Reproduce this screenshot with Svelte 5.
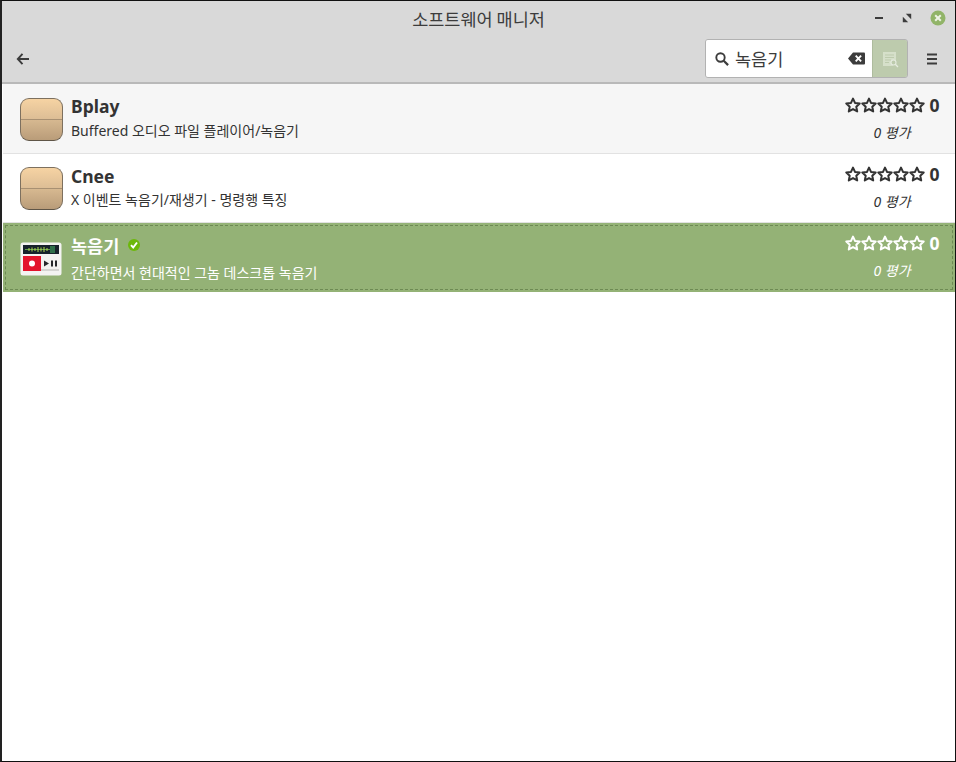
<script>
  const rows = [
    { name: 'Bplay', desc: 'Buffered 오디오 파일 플레이어/녹음기', icon: 'box', cls: 'first' },
    { name: 'Cnee', desc: 'X 이벤트 녹음기/재생기 - 명령행 특징', icon: 'box', cls: 'plain' },
    { name: '녹음기', desc: '간단하면서 현대적인 그놈 데스크톱 녹음기', icon: 'rec', cls: 'selected', installed: true }
  ];
  const stars = [0, 1, 2, 3, 4];
  const starPath = 'M8 1.6l2 4.3 4.7.6-3.4 3.2.9 4.7L8 12.1l-4.2 2.3.9-4.7L1.3 6.5 6 5.9z';
</script>

<div class="window">
  <header class="header">
    <div class="titlebar">
      <span class="title">소프트웨어 매니저</span>
      <div class="controls">
        <svg width="10" height="10" viewBox="0 0 10 10"><rect x="1" y="4" width="8" height="2" fill="#3c3c3c" /></svg>
        <svg class="restore" width="10" height="10" viewBox="0 0 10 10"><path d="M3.800.8H9.200v5.400zM.8 3.800L6.200 9.200H.8z" fill="#3c3c3c" /></svg>
        <svg width="16" height="16" viewBox="0 0 16 16"><circle cx="8" cy="8" r="7.500" fill="#91b468" /><path d="M5.200 5.200l5.600 5.600M10.800 5.200l-5.600 5.600" stroke="#eef3e6" stroke-width="2" /></svg>
      </div>
    </div>
    <div class="toolbar">
      <svg class="back" width="14" height="14" viewBox="0 0 14 14"><path d="M6.500 1.800L1.800 7l4.700 5.200M2 7h11" fill="none" stroke="#3c3c3c" stroke-width="1.900" /></svg>
      <div class="search">
        <div class="entry">
          <svg width="16" height="16" viewBox="0 0 16 16"><circle cx="6.500" cy="6.500" r="4.200" fill="none" stroke="#3c3c3c" stroke-width="1.900" /><path d="M9.700 9.700l4.400 4.400" stroke="#3c3c3c" stroke-width="2.200" /></svg>
          <span class="query">녹음기</span>
          <svg class="clear" width="17" height="13" viewBox="0 0 17 13"><path d="M5 .5H16a1 1 0 0 1 1 1v10a1 1 0 0 1-1 1H5L0 6.500z" fill="#3c3c3c" /><path d="M7.700 3.700l5.400 5.600M13.100 3.700L7.700 9.300" stroke="#fff" stroke-width="1.900" /></svg>
        </div>
        <div class="toggle">
          <svg width="18" height="18" viewBox="0 0 18 18"><path d="M2 2h13v9.500l-3.500 4.500H2z" fill="#d6e0ca" /><path d="M4 5h9M4 7.500h9M4 10h6M4 12.500h4" stroke="#bdcbad" stroke-width="1" /><circle cx="12.500" cy="12.500" r="2.500" fill="#bdcbad" stroke="#e6ece0" stroke-width="1.100" /><path d="M14.300 14.300l2.700 2.700" stroke="#e6ece0" stroke-width="1.300" /></svg>
        </div>
      </div>
      <svg class="menu" width="12" height="12" viewBox="0 0 12 12"><path d="M1 1.500h10M1 6h10M1 10.500h10" stroke="#3c3c3c" stroke-width="2" /></svg>
    </div>
  </header>

  <main class="list">
    {#each rows as row}
      <div class="row {row.cls}">
        <div class="app-icon">
          {#if row.icon === 'box'}
            <div class="box"></div>
          {:else}
            <svg width="42" height="34" viewBox="0 0 42 34">
              <rect x=".5" y=".5" width="41" height="33" rx="2.500" fill="#f3f3f1" />
              <rect x="3" y="3" width="36" height="9" fill="#17222b" />
              <path d="M5 7.500h26" stroke="#5f9e4a" stroke-width="1" />
              <path d="M9 6v3M12 5.500v4M15 6v3M18 5v5M21 5.500v4M24 5v5M27 6v3" stroke="#b6dc55" stroke-width="1" />
              <rect x="30" y="4" width="5" height="7" fill="#2f6f4a" />
              <rect x="3" y="14" width="18" height="15" fill="#e3142c" />
              <circle cx="12" cy="21.500" r="3" fill="#fff" />
              <path d="M24 18.500l5 3-5 3z" fill="#26282b" />
              <path d="M31 18.500h2v6h-2zM35 18.500h2v6h-2z" fill="#26282b" />
              <rect x="21" y="27" width="18" height="2" fill="#d5d5d2" />
            </svg>
          {/if}
        </div>
        <div class="info">
          <div class="name">
            {row.name}
            {#if row.installed}
              <svg class="check" width="12" height="12" viewBox="0 0 12 12"><circle cx="6" cy="6" r="6" fill="#6cb80a" /><path d="M3 6.200l2.200 2.300L9 3.500" fill="none" stroke="#fff" stroke-width="1.900" /></svg>
            {/if}
          </div>
          <div class="desc">{row.desc}</div>
        </div>
        <div class="rating">
          <div class="score">
            <span class="stars">
              {#each stars as s (s)}
                <svg width="16" height="16" viewBox="0 0 16 16"><path d={starPath} fill="none" stroke="currentColor" stroke-width="2" stroke-linejoin="round" /></svg>
              {/each}
            </span>
            <span class="num">0</span>
          </div>
          <div class="count">0 평가</div>
        </div>
      </div>
    {/each}
  </main>
</div>

<style>
  :global(body) {
    margin: 0;
    background: #fff;
  }
  .window {
    box-sizing: border-box;
    width: 956px;
    height: 762px;
    display: flex;
    flex-direction: column;
    border-top: 1px solid #111;
    border-right: 1px solid #111;
    border-bottom: 1px solid #111;
    border-left: 2px solid #222;
    font-family: "Noto Sans", "Noto Sans CJK KR", sans-serif;
    color: #333;
    overflow: hidden;
  }
  .header {
    height: 81px;
    background: #d9d9d9;
    border-bottom: 2px solid #b9b9b9;
    flex: none;
    display: flex;
    flex-direction: column;
  }
  .titlebar {
    height: 37px;
    position: relative;
    display: flex;
    justify-content: center;
    align-items: center;
  }
  .title {
    font-size: 17.500px;
    font-family: "Noto Sans CJK KR", sans-serif;
    font-weight: 400;
    color: #3c3c3c;
    margin-top: -2px;
  }
  .controls {
    position: absolute;
    right: 9px;
    top: 9px;
    display: flex;
    align-items: center;
    gap: 18px;
  }
  .toolbar {
    flex: 1;
    display: flex;
    align-items: center;
    padding: 0 17px 4px 14px;
    margin-top: 1px;
  }
  .back {
    margin-right: auto;
  }
  .search {
    display: flex;
    height: 39px;
    box-sizing: border-box;
    width: 203px;
    margin-right: 18px;
    border: 1px solid #b2b2b2;
    border-radius: 3px;
    overflow: hidden;
  }
  .entry {
    flex: 1;
    background: #fff;
    display: flex;
    align-items: center;
    padding: 0 7px 0 8px;
    gap: 5px;
  }
  .query {
    flex: 1;
    font-size: 17.500px;
    font-family: "Noto Sans CJK KR", sans-serif;
    color: #3c3c3c;
  }
  .toggle {
    width: 34px;
    background: #bdcbad;
    border-left: 1px solid #aebc9e;
    display: flex;
    align-items: center;
    justify-content: center;
  }
  .list {
    flex: 1;
    padding-left: 1px;
  }
  .row {
    height: 69px;
    box-sizing: border-box;
    display: flex;
    align-items: center;
    padding: 0 16px 0 16px;
    border-bottom: 1px solid #e2e2e2;
    background: #fff;
  }
  .row.first {
    background: #f6f6f6;
    height: 70px;
  }
  .row.selected {
    background: #94b276;
    color: #fff;
    border: none;
    outline: 1px dashed #6d8a53;
    outline-offset: -3px;
    border-top: 1px solid #94b276;
  }
  .app-icon {
    width: 44px;
    display: flex;
    justify-content: center;
    margin-right: 8px;
  }
  .selected .app-icon {
    margin-top: 2px;
  }
  .box {
    box-sizing: border-box;
    width: 43px;
    height: 43px;
    margin-top: 1px;
    border: 1px solid #7d705f;
    border-bottom-color: #5f5547;
    border-radius: 9px;
    background: linear-gradient(#f6d3a3 0, #dcbd95 49.500%, #a89072 49.500%, #a89072 52%, #d6b890 52%, #b99c79 100%);
  }
  .info {
    flex: 1;
    display: flex;
    flex-direction: column;
    gap: 4px;
    margin-top: -1px;
  }
  .selected .info {
    margin-top: 1px;
    gap: 6px;
  }
  .plain .info {
    gap: 3px;
  }
  .name {
    font-size: 17.500px;
    line-height: 22px;
    font-weight: 700;
    display: flex;
    align-items: center;
  }
  .check {
    margin-left: 9px;
    margin-top: -1px;
  }
  .desc {
    font-size: 14px;
    line-height: 20px;
  }
  .rating {
    display: flex;
    flex-direction: column;
    align-items: center;
    width: 94px;
    gap: 7px;
  }
  .plain .rating {
    margin-top: -2px;
  }
  .selected .rating {
    margin-top: -4px;
  }
  .score {
    display: flex;
    align-items: center;
    gap: 5px;
    height: 22px;
  }
  .stars {
    display: flex;
  }
  .stars svg {
    display: block;
  }
  .num {
    font-size: 17.500px;
    font-weight: 700;
  }
  .count {
    font-size: 14px;
    font-style: italic;
    line-height: 20px;
  }
</style>
